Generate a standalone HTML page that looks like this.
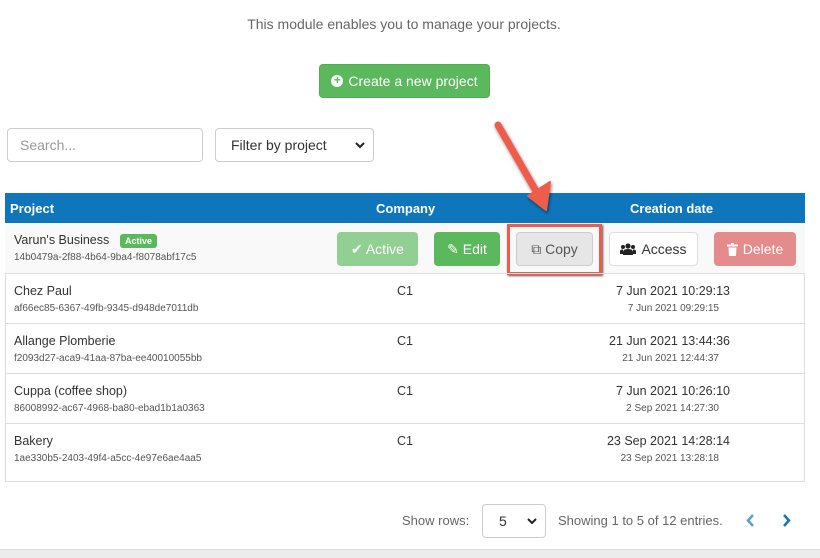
<!DOCTYPE html>
<html><head><style>
*{box-sizing:border-box;margin:0;padding:0}
body{width:820px;height:558px;position:relative;background:#fff;font-family:"Liberation Sans",sans-serif;color:#333;overflow:hidden}
.a{position:absolute}
.btn{position:absolute;height:34px;border-radius:4px;font-size:14px;display:flex;align-items:center;justify-content:center;gap:5px}
.row{position:absolute;left:5px;width:800px;height:50px;border-top:1px solid #ddd;font-size:12px}
.row .n{position:absolute;left:9px;top:10px;font-size:12.5px;color:#333}
.row .id{position:absolute;left:9px;top:29px;font-size:10px;color:#555}
.row .c{position:absolute;left:392px;top:10px;font-size:12.5px}
.row .d1{position:absolute;right:75px;top:10px;font-size:12.5px;text-align:right}
.row .d2{position:absolute;right:86px;top:29px;font-size:10px;color:#555}
.chev{position:absolute;right:8px;top:13px}
</style></head><body>
<div class="a" style="left:0;top:16px;width:808px;text-align:center;font-size:14px;color:#666">This module enables you to manage your projects.</div>
<div class="btn" style="left:319px;top:64px;width:171px;background:#5cb85c;color:#fff;border:1px solid #4cae4c"><span style="display:inline-block;width:12px;height:12px;border-radius:50%;background:#fff;color:#5cb85c;font-size:12px;line-height:11px;text-align:center;font-weight:bold">+</span>Create a new project</div>
<div class="a" style="left:7px;top:128px;width:196px;height:34px;border:1px solid #ccc;border-radius:4px;padding:8px 12px;font-size:14px;color:#999">Search...</div>
<div class="a" style="left:215px;top:128px;width:159px;height:34px;border:1px solid #ccc;border-radius:4px;padding:8px 15px;font-size:14px;color:#333">Filter by project<svg class="chev" width="10" height="7"><path d="M1 1L5 5L9 1" stroke="#222" stroke-width="2" fill="none"/></svg></div>
<div class="a" style="left:5px;top:193px;width:800px;height:289px;border:1px solid #ddd"></div>
<div class="a" style="left:5px;top:193px;width:800px;height:30px;background:#1076bc;color:#fff;font-weight:bold;font-size:13px">
<span class="a" style="left:5px;top:8px">Project</span><span class="a" style="left:371px;top:8px">Company</span><span class="a" style="left:625px;top:8px">Creation date</span></div>
<div class="row" style="top:223px;background:#f9f9f9;border-top:none">
<span class="n" style="top:10px">Varun's Business</span><span class="a" style="left:115px;top:11px;background:#5cb85c;color:#fff;font-size:9px;font-weight:bold;padding:2px 5px;border-radius:3px">Active</span>
<span class="id">14b0479a-2f88-4b64-9ba4-f8078abf17c5</span></div>
<div class="btn" style="left:337px;top:232px;width:81px;background:#92cf92;color:#fff">✔ Active</div>
<div class="btn" style="left:434px;top:232px;width:66px;background:#5cb85c;color:#fff">✎ Edit</div>
<div class="btn" style="left:516px;top:232px;width:77px;background:#e6e6e6;border:1px solid #ccc;color:#555">⧉ Copy</div>
<div class="a" style="left:507px;top:224px;width:95px;height:51px;border:3px solid #ef5b4a;box-shadow:1px 1px 2px #555"></div>
<div class="btn" style="left:609px;top:232px;width:89px;background:#fff;border:1px solid #ddd;color:#333"><svg width="16" height="12"><circle cx="8" cy="3" r="2.6" fill="#222"/><circle cx="3" cy="4" r="2" fill="#222"/><circle cx="13" cy="4" r="2" fill="#222"/><path d="M3 12V9Q3 6 8 6Q13 6 13 9V12Z M0 11V8Q0 6.5 3 6.5V11Z M16 11V8Q16 6.5 13 6.5V11Z" fill="#222"/></svg>Access</div>
<div class="btn" style="left:714px;top:232px;width:82px;background:#e48b8b;color:#fff"><svg width="11" height="13"><rect x="0" y="1.5" width="11" height="2" fill="#fff"/><rect x="4" y="0" width="3" height="2" fill="#fff"/><path d="M1.5 4.5H9.5L9 13H2Z" fill="#fff"/></svg>Delete</div>
<div class="row" style="top:273px"><span class="n">Chez Paul</span><span class="id">af66ec85-6367-49fb-9345-d948de7011db</span><span class="c">C1</span><span class="d1">7 Jun 2021 10:29:13</span><span class="d2">7 Jun 2021 09:29:15</span></div>
<div class="row" style="top:323px"><span class="n">Allange Plomberie</span><span class="id">f2093d27-aca9-41aa-87ba-ee40010055bb</span><span class="c">C1</span><span class="d1">21 Jun 2021 13:44:36</span><span class="d2">21 Jun 2021 12:44:37</span></div>
<div class="row" style="top:373px"><span class="n">Cuppa (coffee shop)</span><span class="id">86008992-ac67-4968-ba80-ebad1b1a0363</span><span class="c">C1</span><span class="d1">7 Jun 2021 10:26:10</span><span class="d2">2 Sep 2021 14:27:30</span></div>
<div class="row" style="top:423px"><span class="n">Bakery</span><span class="id">1ae330b5-2403-49f4-a5cc-4e97e6ae4aa5</span><span class="c">C1</span><span class="d1">23 Sep 2021 14:28:14</span><span class="d2">23 Sep 2021 13:28:18</span></div>
<svg class="a" style="left:480px;top:110px" width="90" height="110"><defs><filter id="s"><feDropShadow dx="1" dy="2" stdDeviation="1.5" flood-opacity="0.5"/></filter></defs><g filter="url(#s)" fill="#ef5b4a" stroke="#ef5b4a" stroke-linecap="round"><line x1="18" y1="15" x2="60" y2="88" stroke-width="7"/><polygon points="48,86 70,72 66,100" stroke-width="2" stroke-linejoin="round"/></g></svg>
<span class="a" style="left:402px;top:513px;font-size:13px;color:#666">Show rows:</span>
<div class="a" style="left:482px;top:504px;width:64px;height:34px;border:1px solid #ccc;border-radius:4px;padding:8px 16px;font-size:14px">5<svg class="chev" width="10" height="7"><path d="M1 1L5 5L9 1" stroke="#222" stroke-width="2" fill="none"/></svg></div>
<span class="a" style="left:558px;top:513px;font-size:13px;color:#666">Showing 1 to 5 of 12 entries.</span>
<svg class="a" style="left:746px;top:514px" width="9" height="13"><path d="M7 1L2 6.5L7 12" stroke="#5a9fd6" stroke-width="2.5" fill="none"/></svg>
<svg class="a" style="left:782px;top:514px" width="9" height="13"><path d="M2 1L7 6.5L2 12" stroke="#1076bc" stroke-width="2.5" fill="none"/></svg>
<div class="a" style="left:0;top:549px;width:820px;height:9px;background:#ececec;border-top:1px solid #ddd"></div>
</body></html>
